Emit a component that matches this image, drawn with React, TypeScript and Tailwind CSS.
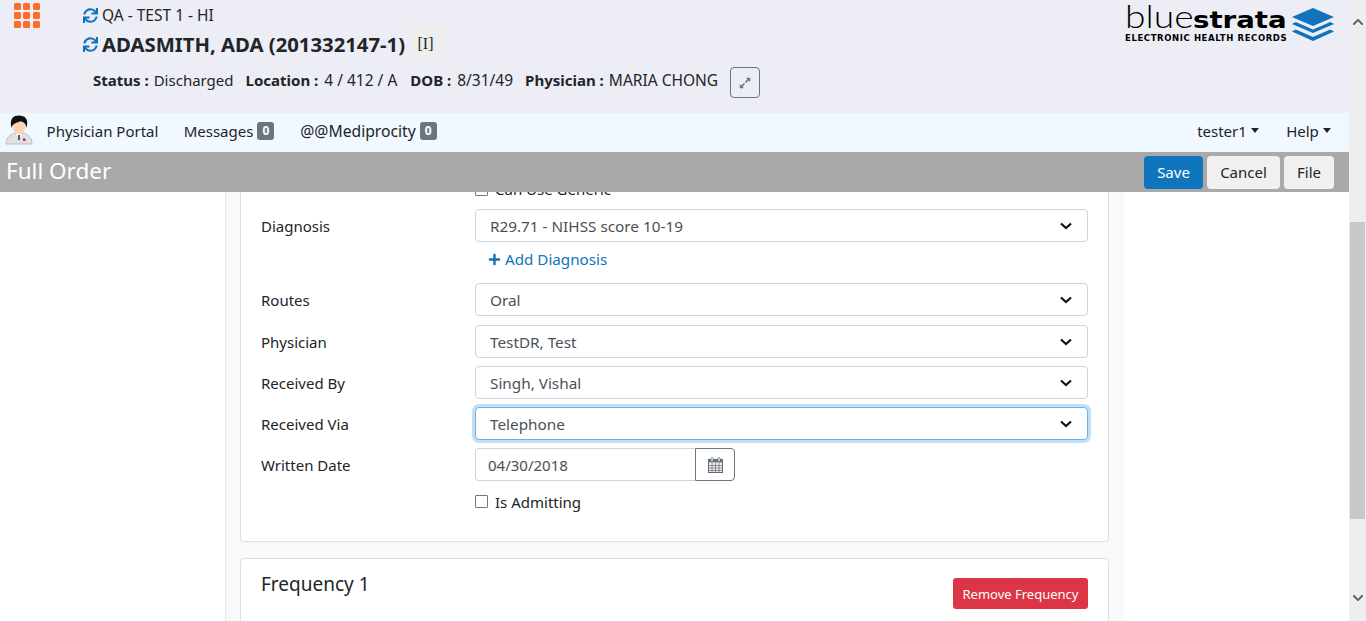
import React from 'react';
import { FaSync, FaPlus, FaExpandAlt, FaChevronUp, FaChevronDown } from 'react-icons/fa';

const font = "font-['Noto_Sans','Open_Sans',sans-serif]";

const SelectChevron = () => (
  <svg width="12" height="8" viewBox="0 0 12 8" className="shrink-0">
    <path d="M1 1.5 L6 6 L11 1.5" fill="none" stroke="#0b1220" strokeWidth="2.2" />
  </svg>
);

const AppGrid = () => (
  <div className="grid grid-cols-3 gap-[2px] w-[26px]">
    {[0, 1, 2, 3, 4, 5, 6, 7, 8].map((i) => (
      <div key={i} className="w-[7px] h-[7px] rounded-[1.5px] bg-[#ff6a26]" />
    ))}
  </div>
);

const DoctorAvatar = () => (
  <svg width="28" height="30" viewBox="0 0 28 30" className="shrink-0">
    <path d="M1 29 C1 22 6 19 10 18 L18 18 C22 19 27 22 27 29 Z" fill="#dfe2e5" stroke="#a8adb3" strokeWidth="0.7" />
    <path d="M11 18 L14 25 L17 18 Z" fill="#ffffff" />
    <rect x="13.2" y="20" width="1.6" height="5" fill="#333" />
    <rect x="18" y="23.5" width="2.5" height="2.5" fill="#d0202a" />
    <ellipse cx="14" cy="11" rx="6.5" ry="8" fill="#fbd3b4" />
    <path d="M6.5 13 C4 3 9 0.5 14 0.5 C20 0.5 24 4 21.5 13 C21 8 18 6.5 15 6.5 C11 8 8 8 6.5 13 Z" fill="#111214" />
  </svg>
);

const CalendarIcon = () => (
  <svg width="15" height="16" viewBox="0 0 15 16">
    <rect x="0.5" y="2.5" width="14" height="13" fill="#f4f4f4" stroke="#5f6871" />
    <rect x="0.5" y="2.5" width="14" height="3" fill="#6c757d" />
    <path d="M0.5 8.5 H14.5 M0.5 11 H14.5 M0.5 13.5 H14.5 M4 5.5 V15.5 M7.5 5.5 V15.5 M11 5.5 V15.5" stroke="#6c757d" strokeWidth="0.8" />
    <rect x="3" y="0.5" width="2" height="4" rx="1" fill="#fff" stroke="#5f6871" strokeWidth="0.7" />
    <rect x="10" y="0.5" width="2" height="4" rx="1" fill="#fff" stroke="#5f6871" strokeWidth="0.7" />
  </svg>
);

const LogoStack = () => (
  <svg width="44" height="34" viewBox="0 0 46 34" preserveAspectRatio="none">
    <polygon points="23,0 45,9 23,18 1,9" fill="#1173bb" />
    <polygon points="5,14 23,21.5 41,14 45,16 23,25 1,16" fill="#1173bb" />
    <polygon points="5,21.5 23,29 41,21.5 45,23.5 23,33 1,23.5" fill="#1173bb" />
  </svg>
);

const NavTab = ({ label, count, caret, className, labelClass }: { label: string; count?: number; caret?: boolean; className: string; labelClass?: string }) => (
  <div className={`h-[33px] flex items-center justify-center gap-[4px] rounded border border-[#f0f8ff] bg-[#f2f8ff] text-[#212529] ${className}`}>
    <span className={labelClass}>{label}</span>
    {count !== undefined && (
      <span className="w-[17px] h-[18px] rounded-[3px] bg-[#6c757d] text-white text-[12px] font-bold flex items-center justify-center">{count}</span>
    )}
    {caret && <span className="w-0 h-0 border-x-[4.5px] border-x-transparent border-t-[5px] border-t-[#212529]" />}
  </div>
);

const FormRow = ({ label, value, focused, className }: { label: string; value: string; focused?: boolean; className: string }) => (
  <div className={`flex items-center ${className}`}>
    <label className="w-[214px] text-[#212529]">{label}</label>
    <div
      className={`w-[613px] h-[33px] flex items-center justify-between pl-[14px] pr-[15px] bg-white rounded text-[#495057] text-[15.3px] border ${
        focused ? 'border-[#6cb2e8] shadow-[0_0_0_3px_#c2dff3]' : 'border-[#ced4da]'
      }`}
    >
      <span>{value}</span>
      <SelectChevron />
    </div>
  </div>
);

export default function App() {
  return (
    <div className={`${font} flex h-[621px] w-[1366px] overflow-hidden bg-white text-[15px] leading-[22px]`}>
      <div className="w-[1349px] flex flex-col shrink-0">
        {/* Patient header */}
        <header className="h-[113px] shrink-0 bg-[#ecedf5] flex text-[#212529]">
          <div className="w-[83px] pl-[14px] pt-[3px] shrink-0">
            <AppGrid />
          </div>
          <div className="flex-1 pt-[4px]">
            <div className="flex items-center gap-[4px] h-[22px]">
              <FaSync className="text-[#1173bb] text-[15px]" />
              <span className="text-[15.5px]">QA - TEST 1 - HI</span>
            </div>
            <div className="flex items-center gap-[4px] mt-[1px] h-[34px]">
              <FaSync className="text-[#1173bb] text-[15px]" />
              <span className="text-[20.3px] font-bold">ADASMITH, ADA (201332147-1)</span>
              <span className="w-[35px] h-[33px] ml-[1px] mb-[3px] pt-[3px] pr-[4px] rounded bg-[#eeeeee] flex items-center justify-center text-[16px] font-['Liberation_Serif',serif]">[I]</span>
            </div>
            <div className="flex items-center ml-[10px] mt-[3px] h-[32px]">
              <b>Status :</b><span className="ml-[5px]">Discharged</span>
              <b className="ml-[12px]">Location :</b><span className="ml-[6px] text-[15.5px]">4 / 412 / A</span>
              <b className="ml-[13px]">DOB :</b><span className="ml-[6px] text-[15.5px]">8/31/49</span>
              <b className="ml-[12px]">Physician :</b><span className="ml-[5px] text-[15.5px]">MARIA CHONG</span>
              <button className="ml-[12px] mt-[5px] w-[30px] h-[31px] rounded border border-[#6c757d] flex items-center justify-center text-[#6c757d]">
                <FaExpandAlt className="text-[12px]" />
              </button>
            </div>
          </div>
          <div className="w-[224px] shrink-0 pt-[8px] flex items-start gap-[3px]">
            <div className="w-[163px] text-black">
              <div className="h-[24px] flex items-end leading-none">
                <span className="w-[68px] inline-block font-['Lato',sans-serif] font-light text-[31px] scale-x-[1.2] origin-left">blue</span>
                <span className="w-[94px] inline-block font-['DejaVu_Sans',sans-serif] font-bold text-[23px] scale-x-[1.2] origin-left">strata</span>
              </div>
              <div className="font-['DejaVu_Sans',sans-serif] font-bold text-[8.5px] leading-[10px] mt-[1px] tracking-[0.6px] whitespace-nowrap">ELECTRONIC HEALTH RECORDS</div>
            </div>
            <LogoStack />
          </div>
        </header>

        {/* Main nav */}
        <nav className="h-[39px] shrink-0 bg-[#eff7ff] flex items-start pt-[1px] pl-[5px] pr-[5px] gap-[2px]">
          <div className="pt-[1px]"><DoctorAvatar /></div>
          <NavTab label="Physician Portal" className="w-[135px]" />
          <NavTab label="Messages" count={0} className="w-[114px]" />
          <NavTab label="@@Mediprocity" count={0} className="w-[161px]" labelClass="text-[15.7px]" />
          <div className="flex-1" />
          <NavTab label="tester1" caret className="w-[86px]" />
          <NavTab label="Help" caret className="w-[71px]" />
        </nav>

        {/* Title bar */}
        <div className="h-[40px] shrink-0 bg-[#a9a9a9] flex items-center pl-[6px] pr-[15px] relative z-10">
          <h1 className="text-[22.5px] leading-[36px] mb-[2px] text-white flex-1">Full Order</h1>
          <div className="flex gap-[4px]">
            <button className="w-[59px] h-[33px] rounded bg-[#0f75bc] text-white">Save</button>
            <button className="w-[73px] h-[33px] rounded bg-[#f0f0f0] text-[#212529]">Cancel</button>
            <button className="w-[50px] h-[33px] rounded bg-[#f0f0f0] text-[#212529]">File</button>
          </div>
        </div>

        {/* Scrolled form */}
        <main className="flex-1 min-h-0 overflow-hidden">
          <div className="w-[899px] ml-[225px] bg-[#f8f9fa] border-l border-[#e4e6e8] pl-[14px] pr-[15px] -mt-[20px]">
            <section className="bg-white border border-[#dfdfdf] rounded h-[370px] px-[20px] pt-[6px]">
              <div className="flex items-center ml-[214px] h-[20px]">
                <span className="w-[13px] h-[13px] border border-[#767676] rounded-[1px] mr-[7px]" />
                <span className="text-[#212529]">Can Use Generic</span>
              </div>
              <FormRow label="Diagnosis" value="R29.71 - NIHSS score 10-19" className="mt-[10px]" />
              <div className="ml-[227px] mt-[4px] h-[26px] flex items-center gap-[4px] text-[#1173bb] text-[15.2px]">
                <FaPlus className="text-[13px]" />
                <span>Add Diagnosis</span>
              </div>
              <FormRow label="Routes" value="Oral" className="mt-[11px]" />
              <FormRow label="Physician" value="TestDR, Test" className="mt-[9px]" />
              <FormRow label="Received By" value="Singh, Vishal" className="mt-[8px]" />
              <FormRow label="Received Via" value="Telephone" focused className="mt-[8px]" />
              <div className="flex items-center mt-[8px]">
                <label className="w-[214px] text-[#212529]">Written Date</label>
                <div className="w-[220px] h-[33px] flex items-center pl-[12px] border border-[#ced4da] border-r-0 rounded-l text-[#495057]">04/30/2018</div>
                <div className="w-[40px] h-[33px] flex items-center justify-center border border-[#6c757d] rounded-r">
                  <CalendarIcon />
                </div>
              </div>
              <div className="flex items-center ml-[214px] mt-[10px] h-[22px]">
                <span className="w-[13px] h-[13px] mb-[2px] border border-[#767676] rounded-[1px] mr-[7px]" />
                <span className="text-[#212529]">Is Admitting</span>
              </div>
            </section>
            <section className="bg-white border border-[#dfdfdf] rounded mt-[16px] h-[120px] px-[20px] pt-[14px] flex justify-between items-start">
              <h2 className="text-[19px] leading-[22px] text-[#212529]">Frequency 1</h2>
              <button className="w-[135px] h-[31px] mt-[5px] rounded-[3px] bg-[#dc3545] text-white text-[13px]">Remove Frequency</button>
            </section>
          </div>
        </main>
      </div>

      {/* Page scrollbar */}
      <div className="w-[17px] shrink-0 bg-[#eeeeee] flex flex-col items-center">
        <div className="h-[44px] flex items-center justify-center">
          <FaChevronUp className="text-[#5f5f5f] text-[12px]" />
        </div>
        <div className="h-[178px]" />
        <div className="w-[15px] h-[297px] bg-[#c8c8c8]" />
        <div className="flex-1" />
        <div className="h-[46px] flex items-center justify-center">
          <FaChevronDown className="text-[#5f5f5f] text-[12px]" />
        </div>
      </div>
    </div>
  );
}
